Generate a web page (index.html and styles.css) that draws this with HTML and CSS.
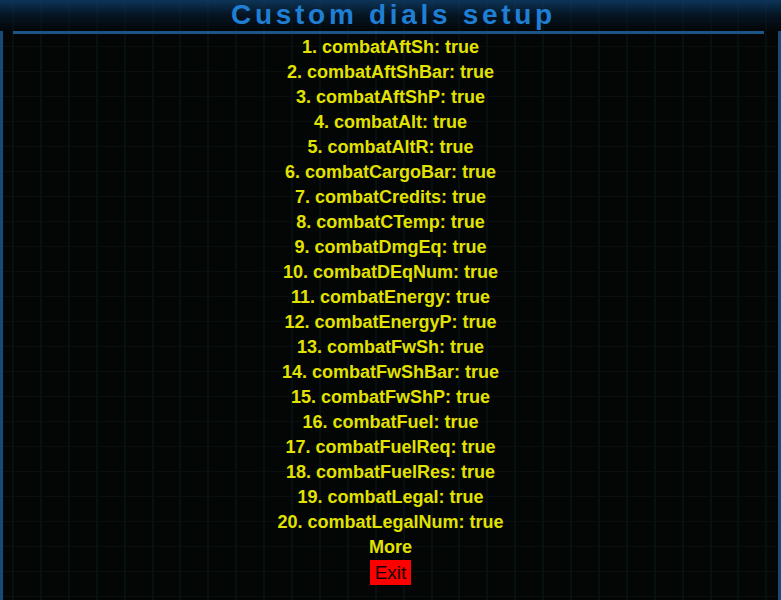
FILE: index.html
```html
<!DOCTYPE html>
<html>
<head>
    <meta charset="utf-8">
    <title>Custom dials setup</title>
    <link rel="stylesheet" href="styles.css">
</head>
<body>
    <div id="screen">
        <div id="header">
            <h1>Custom dials setup</h1>
            <div class="title-bar"></div>
        </div>
        <div id="frame">
            <ul class="menu">
                <li>1. combatAftSh: true</li>
                <li>2. combatAftShBar: true</li>
                <li>3. combatAftShP: true</li>
                <li>4. combatAlt: true</li>
                <li>5. combatAltR: true</li>
                <li>6. combatCargoBar: true</li>
                <li>7. combatCredits: true</li>
                <li>8. combatCTemp: true</li>
                <li>9. combatDmgEq: true</li>
                <li>10. combatDEqNum: true</li>
                <li>11. combatEnergy: true</li>
                <li>12. combatEnergyP: true</li>
                <li>13. combatFwSh: true</li>
                <li>14. combatFwShBar: true</li>
                <li>15. combatFwShP: true</li>
                <li>16. combatFuel: true</li>
                <li>17. combatFuelReq: true</li>
                <li>18. combatFuelRes: true</li>
                <li>19. combatLegal: true</li>
                <li>20. combatLegalNum: true</li>
                <li>More</li>
                <li><span class="exit-btn">Exit</span></li>
            </ul>
        </div>
    </div>
</body>
</html>
```

FILE: styles.css
```css
html, body {
    margin: 0;
    padding: 0;
    background: #050505;
}
#screen {
    width: 781px;
    height: 600px;
    overflow: hidden;
    font-family: "Liberation Sans", Arial, sans-serif;
    background-color: #040505;
    /* faint scanner grid */
    background-image:
        repeating-linear-gradient(90deg, transparent 0, transparent 12px, #071011 12px, #071011 14px, transparent 14px, transparent 27.9px),
        repeating-linear-gradient(180deg, transparent 0, transparent 21px, #070f10 21px, #070f10 22px, transparent 22px, transparent 25px);
    display: flex;
    flex-direction: column;
}

#header {
    height: 34px;
    background: linear-gradient(180deg, rgba(14, 58, 98, 0.9) 0%, rgba(6, 30, 52, 0.6) 45%, rgba(0, 0, 0, 0.3) 100%);
    display: flex;
    flex-direction: column;
}
#header h1 {
    margin: 0;
    height: 31px;
    line-height: 29px;
    text-align: center;
    font-size: 28px;
    font-weight: bold;
    letter-spacing: 3.7px;
    padding-left: 6px;
    color: #1f7fd4;
}
.title-bar {
    height: 3px;
    margin: 0 17px 0 13px;
    background: #1c5486;
}

#frame {
    flex-grow: 1;
    border-left: 3px solid #174a78;
    border-right: 3px solid #174a78;
    margin-top: -3px;
}

.menu {
    list-style: none;
    margin: 0;
    padding: 4px 0 0 0;
    text-align: center;
}
.menu li {
    height: 25px;
    line-height: 25px;
    font-size: 18px;
    font-weight: bold;
    color: #e2e200;
}
.exit-btn {
    display: inline-block;
    height: 25px;
    line-height: 25px;
    padding: 0 5px;
    background: #ff0000;
    color: #140000;
    font-weight: normal;
    font-size: 19px;
}
```
